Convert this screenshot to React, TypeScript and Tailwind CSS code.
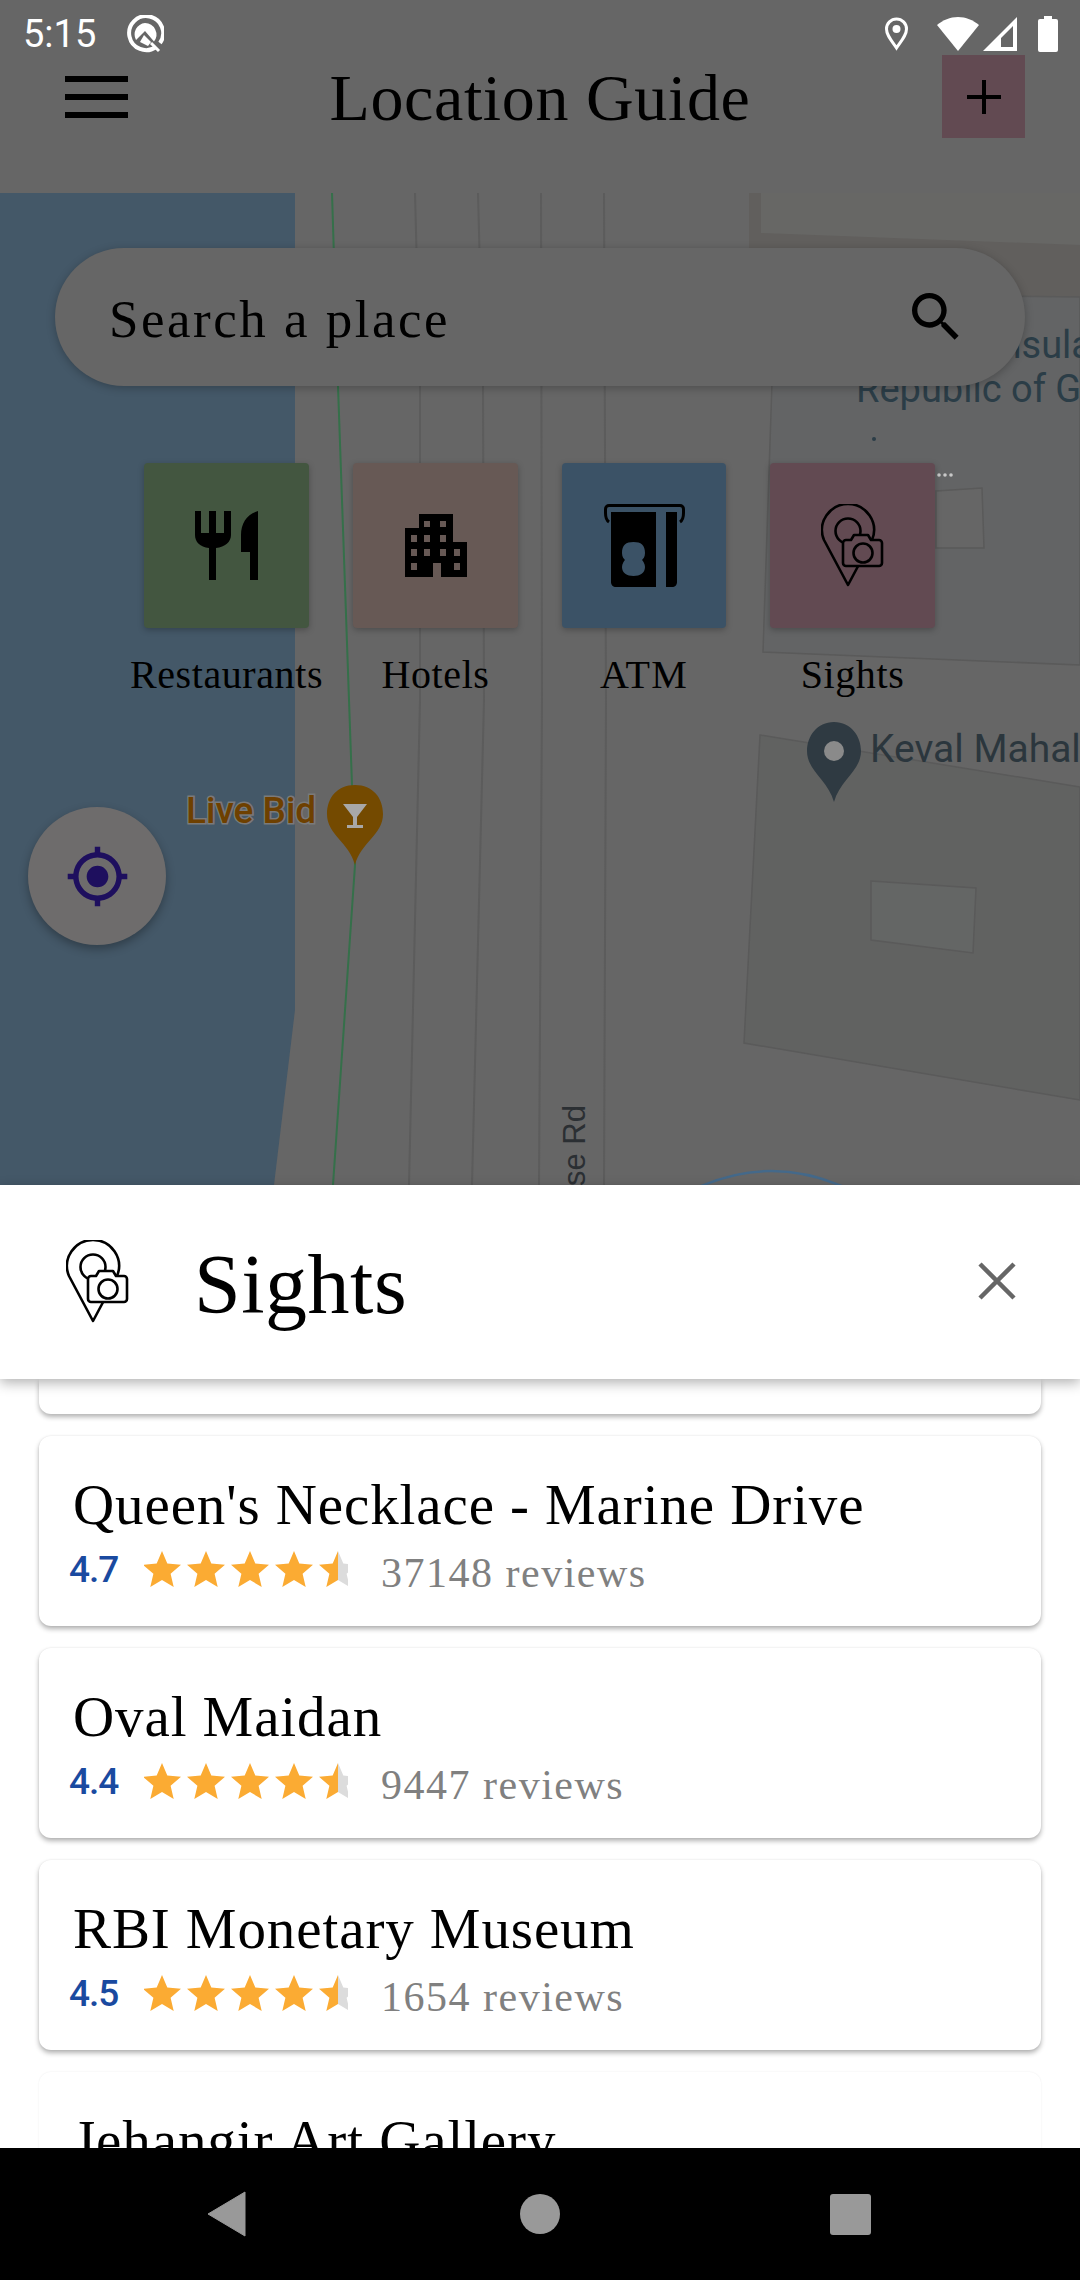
// App.tsx - Location Guide, "Sights" sheet open over the dimmed map
const slab = "font-['Liberation_Serif',serif]";

const places = [
  { name: "Queen's Necklace - Marine Drive", rating: "4.7", reviews: "37148 reviews" },
  { name: "Oval Maidan", rating: "4.4", reviews: "9447 reviews" },
  { name: "RBI Monetary Museum", rating: "4.5", reviews: "1654 reviews" },
];

const STAR = "M18 0l5.3 12.6L37 13.8 26.6 22.8 29.7 36 18 29 6.300 36 9.400 22.800 -1 13.800 12.700 12.600z";

function SightsIcon({ bg, className }: { bg: string; className: string }) {
  return (
    <svg viewBox="0 0 64 84" className={className} fill="none" stroke="#000" strokeWidth="2.6">
      <path d="M27 81 3 36A26 26 0 1 1 51 36Z" strokeLinejoin="round" />
      <circle cx="27" cy="27" r="12.500" />
      <path
        d="M25 36h5l3-5h14l3 5h8a3 3 0 0 1 3 3v20a3 3 0 0 1-3 3H25a3 3 0 0 1-3-3V39a3 3 0 0 1 3-3z"
        fill={bg}
        strokeLinejoin="round"
      />
      <circle cx="42" cy="49" r="9.500" fill={bg} />
    </svg>
  );
}

function Stars({ id }: { id: string }) {
  return (
    <svg viewBox="0 0 204 36" className="w-[204px] h-[36px] shrink-0">
      {[0, 44, 88, 132].map((x) => (
        <path key={x} d={STAR} transform={`translate(${x} 0)`} fill="#fbab33" />
      ))}
      <clipPath id={`${id}-l`}><rect x="175" y="0" width="19" height="36" /></clipPath>
      <clipPath id={`${id}-r`}><rect x="194" y="0" width="10" height="36" /></clipPath>
      <g clipPath={`url(#${id}-l)`}>
        <path d={STAR} transform="translate(176 0)" fill="#fbab33" />
      </g>
      <g clipPath={`url(#${id}-r)`}>
        <path d={STAR} transform="translate(176 0)" fill="#dcdcdc" />
      </g>
    </svg>
  );
}

function PlaceCard({ name, rating, reviews }: { name: string; rating: string; reviews: string }) {
  return (
    <div className="h-[190px] shrink-0 rounded-[12px] bg-white shadow-[0_3px_5px_rgba(0,0,0,0.3),0_0_2px_rgba(0,0,0,0.08)] pl-[34px] pt-[37px]">
      <div className={`${slab} text-[57px] leading-[64px] text-black tracking-[0.9px] whitespace-nowrap`}>{name}</div>
      <div className="flex items-center mt-[10px] -ml-[4px] h-[44px]">
        <div className="w-[312px] flex items-center gap-[26px] shrink-0">
          <span className="font-['Roboto',sans-serif] font-medium text-[37px] leading-none text-[#1a4aa0] tracking-[-1px]">{rating}</span>
          <Stars id={`star-${rating}`} />
        </div>
        <span className={`${slab} mt-[8px] text-[42px] leading-none text-[#808080] tracking-[1.5px]`}>{reviews}</span>
      </div>
    </div>
  );
}

function MapLayer() {
  return (
    <svg viewBox="0 193 1080 992" className="absolute inset-0 w-full h-full" fill="none">
      <path d="M749 193H1080V298H749Z" fill="#615f5d" />
      <path d="M761 193H1080V245L761 233Z" fill="#676765" />
      <path d="M775 293 1080 297V665L763 652Z" fill="#636465" stroke="#5a5a5a" strokeWidth="1.500" />
      <path d="M936 491 982 488 984 548H936Z" fill="#666" stroke="#5a5a5a" strokeWidth="1.500" />
      <path d="M760 735 1080 787V1100L744 1043Z" fill="#616261" stroke="#5a5a5a" strokeWidth="1.500" />
      <path d="M871 881 976 888 973 953 871 940Z" fill="#646665" stroke="#5a5a5a" strokeWidth="1.500" />
      <path d="M0 193H295V1010L274 1185H0Z" fill="#445868" />
      <g stroke="#5c5c5c" strokeWidth="2">
        <path d="M415 193 420 386 420 700 409 1185" />
        <path d="M478 193 483 386 484 700 472 1185" />
        <path d="M541 193 542 700 539 1185" />
        <path d="M604 193 606 700 604 1185" />
      </g>
      <path d="M332 193 338 386 349 700 352 785 355 865 333 1185" stroke="#35704a" strokeWidth="2" />
      <path d="M699 1187Q771 1155 844 1187" stroke="#44698a" strokeWidth="2.500" />

      <text x="1092" y="358" textAnchor="end" fill="#2b3d47" fontFamily="Roboto, sans-serif" fontSize="38">Peninsula</text>
      <text x="856" y="402" fill="#2b3d47" fontFamily="Roboto, sans-serif" fontSize="38">Republic of Gujarat</text>
      <circle cx="874" cy="439" r="2" fill="#2b3d47" />
      <g fill="#c8c8c8">
        <circle cx="939" cy="475" r="1.800" />
        <circle cx="945" cy="475" r="1.800" />
        <circle cx="951" cy="475" r="1.800" />
      </g>

      <path d="M355 785c-18 0-28 13-28 29 0 21 22 28 28 51 6-23 28-30 28-51 0-16-10-29-28-29z" fill="#744a00" />
      <path d="M343 804h24l-10 13v8h6v3h-16v-3h6v-8z" fill="#a8a8a8" />
      <text x="186" y="823" fill="#6e4000" stroke="#7a7a7a" strokeWidth="3" paintOrder="stroke" fontWeight="500" fontFamily="Roboto, sans-serif" fontSize="37">Live Bid</text>

      <path d="M834 722c-17 0-27 14-27 29 0 20 21 29 27 51 6-22 27-31 27-51 0-15-10-29-27-29z" fill="#2f3a42" />
      <circle cx="834" cy="751" r="10" fill="#8a8a8a" />
      <text x="870" y="762" fill="#2b363d" fontFamily="Roboto, sans-serif" fontSize="39">Keval Mahal</text>

      <text transform="translate(585 1224) rotate(-90)" fill="#2b2f33" fontFamily="'Liberation Sans', sans-serif" fontSize="31">Bose Rd</text>
    </svg>
  );
}

export default function App() {
  return (
    <div className="w-[1080px] h-[2280px] flex flex-col overflow-hidden bg-white">
      <header className="relative z-10 h-[193px] shrink-0 bg-[#666666]">
        <div className="h-[55px] flex items-center pl-[23px] pr-[22px] pt-[12px] relative">
          <span className="font-['Roboto',sans-serif] text-[38px] leading-none text-white">5:15</span>
          <svg viewBox="0 0 38 38" className="w-[38px] h-[38px] ml-[30px]" fill="none">
            <path d="M30 32A17 17 0 1 1 34 28" stroke="#fff" strokeWidth="4" />
            <path d="M19 8a11.500 11.500 0 0 1 9 18.500L19 16l-9 9A11.500 11.500 0 0 1 19 8z" fill="#fff" />
            <path d="M18 20l7 7-3 4-8-4z" fill="#fff" />
            <path d="M25 28l8 8" stroke="#fff" strokeWidth="3" />
          </svg>
          <div className="ml-auto flex items-center">
            <svg viewBox="0 0 25 34" className="w-[25px] h-[34px]" fill="none">
              <path d="M12.500 31C7 23 2.500 18 2.500 12a10 10 0 0 1 20 0c0 6-4.500 11-10 19z" stroke="#fff" strokeWidth="3" />
              <circle cx="12.500" cy="12" r="4" fill="#fff" />
            </svg>
            <svg viewBox="0 0 42 34" className="w-[42px] h-[34px] ml-[28px]">
              <path d="M21 34 0 8C6 3 13 0 21 0s15 3 21 8z" fill="#fff" />
            </svg>
            <svg viewBox="0 0 34 34" className="w-[34px] h-[34px] ml-[4px]">
              <path fillRule="evenodd" d="M0 34 34 0V34ZM18 30H30V9L18 21Z" fill="#fff" />
            </svg>
            <svg viewBox="0 0 20 36" className="w-[20px] h-[36px] ml-[21px]">
              <path d="M6 0h8v3h4a2 2 0 0 1 2 2v29a2 2 0 0 1-2 2H2a2 2 0 0 1-2-2V5a2 2 0 0 1 2-2h4z" fill="#fff" />
            </svg>
          </div>
        </div>
        <div className="relative h-[83px] flex items-center justify-between pl-[65px] pr-[55px]">
          <div className="flex flex-col gap-[12px]">
            <div className="w-[63px] h-[6px] bg-black" />
            <div className="w-[63px] h-[6px] bg-black" />
            <div className="w-[63px] h-[6px] bg-black" />
          </div>
          <h1 className={`${slab} absolute left-0 right-0 text-center text-[66px] leading-[83px] text-black font-normal pointer-events-none tracking-[0.6px] pt-[1px]`}>
            Location Guide
          </h1>
          <button className="w-[83px] h-[83px] bg-[#624a52] flex items-center justify-center">
            <svg viewBox="0 0 34 34" className="w-[34px] h-[34px]">
              <path d="M15 0h4v15h15v4H19v15h-4V19H0v-4h15z" fill="#000" />
            </svg>
          </button>
        </div>
      </header>

      <section className="relative h-[992px] shrink-0 bg-[#666666] overflow-hidden">
        <MapLayer />
        <div className="absolute inset-0 flex flex-col">
          <div className="mx-[55px] mt-[55px] h-[138px] rounded-full bg-[#666666] shadow-[0_2px_8px_rgba(0,0,0,0.25)] flex items-center justify-between pl-[54px] pr-[65px]">
            <span className={`${slab} pt-[4px] text-[53px] leading-none text-black tracking-[2.5px]`}>Search a place</span>
            <svg viewBox="3 3 18 18" className="w-[48px] h-[48px]">
              <path d="M15.500 14h-.79l-.28-.27A6.471 6.471 0 0 0 16 9.500 6.500 6.500 0 1 0 9.500 16c1.610 0 3.090-.59 4.230-1.570l.27.28v.79l5 4.990L20.490 19l-4.990-5zm-6 0C7.010 14 5 11.990 5 9.500S7.010 5 9.500 5 14 7.010 14 9.500 11.990 14 9.500 14z" fill="#000" />
            </svg>
          </div>

          <div className="flex ml-[144px] mt-[77px] gap-[44px] h-[165px]">
            <div className="relative w-[165px] h-[165px] rounded-[4px] bg-[#435640] shadow-[0_2px_6px_rgba(0,0,0,0.25)] flex items-center justify-center">
              <svg viewBox="0 0 63 69" className="w-[63px] h-[69px]">
                <path d="M0 0h6v22h8V0h7v22h8V0h7v24c0 7-6 12-15 13v32h-7V37C5 36 0 31 0 24z" fill="#000" />
                <path d="M63 0v69h-8V41h-9V24C46 12 52 3 63 0z" fill="#000" />
              </svg>
              <span className={`${slab} absolute top-[192px] left-1/2 -translate-x-1/2 whitespace-nowrap text-[40px] leading-none text-black tracking-[0.6px]`}>Restaurants</span>
            </div>
            <div className="relative w-[165px] h-[165px] rounded-[4px] bg-[#675955] shadow-[0_2px_6px_rgba(0,0,0,0.25)] flex items-center justify-center">
              <svg viewBox="0 0 62 63" className="w-[62px] h-[63px]">
                <path d="M14 0h34v28h14v35H36V49h-8v14H0V14h14z" fill="#000" />
                <path d="M19 7h6v6h-6zM35 7h6v6h-6zM6 21h6v7H6zM19 21h6v7h-6zM35 21h6v7h-6zM6 35h6v7H6zM19 35h6v7h-6zM35 35h6v7h-6zM49 35h6v7h-6zM6 49h6v7H6zM49 49h6v7h-6z" fill="#675955" />
              </svg>
              <span className={`${slab} absolute top-[192px] left-1/2 -translate-x-1/2 whitespace-nowrap text-[40px] leading-none text-black tracking-[0.6px]`}>Hotels</span>
            </div>
            <div className="relative w-[164px] h-[165px] rounded-[4px] bg-[#3b5266] shadow-[0_2px_6px_rgba(0,0,0,0.25)] flex items-center justify-center">
              <svg viewBox="0 0 81 83" className="w-[81px] h-[83px]" fill="none">
                <path d="M5 18C2 16 1.500 13 1.500 9V5C1.500 3 3 1.500 5 1.500H76C78 1.500 79.500 3 79.500 5V9C79.500 13 79 16 76 18" stroke="#000" strokeWidth="3" />
                <path d="M7 8H52V83H12C9 83 7 81 7 78Z" fill="#000" />
                <path d="M62 8H73V78C73 81 71 83 68 83H62Z" fill="#000" />
                <path d="M18 49C18 41 22 38 29.500 38S41 41 41 49C41 53 39 55 38 56C39 57 41 60 41 63C41 69 36 72 29.500 72S18 69 18 63C18 60 20 57 21 56C20 55 18 53 18 49Z" fill="#3b5266" />
              </svg>
              <span className={`${slab} absolute top-[192px] left-1/2 -translate-x-1/2 whitespace-nowrap text-[40px] leading-none text-black tracking-[1.2px]`}>ATM</span>
            </div>
            <div className="relative w-[165px] h-[165px] rounded-[4px] bg-[#624a52] shadow-[0_2px_6px_rgba(0,0,0,0.25)] flex items-center justify-center">
              <SightsIcon bg="#624a52" className="w-[64px] h-[84px]" />
              <span className={`${slab} absolute top-[192px] left-1/2 -translate-x-1/2 whitespace-nowrap text-[40px] leading-none text-black tracking-[0.6px]`}>Sights</span>
            </div>
          </div>

          <button className="ml-[28px] mt-[179px] w-[138px] h-[138px] rounded-full bg-[#6e6c6c] shadow-[0_4px_10px_rgba(0,0,0,0.3)] flex items-center justify-center">
            <svg viewBox="0 0 24 24" className="w-[65px] h-[65px]">
              <path d="M12 8c-2.210 0-4 1.790-4 4s1.790 4 4 4 4-1.790 4-4-1.790-4-4-4zm8.940 3c-.46-4.170-3.770-7.480-7.940-7.940V1h-2v2.060C6.830 3.520 3.520 6.830 3.060 11H1v2h2.060c.46 4.170 3.770 7.480 7.940 7.940V23h2v-2.060c4.170-.46 7.480-3.770 7.940-7.940H23v-2h-2.060zM12 19c-3.870 0-7-3.130-7-7s3.130-7 7-7 7 3.130 7 7-3.130 7-7 7z" fill="#1e0f5e" />
            </svg>
          </button>
        </div>
      </section>

      <div className="relative z-10 h-[194px] shrink-0 bg-white shadow-[0_4px_12px_rgba(0,0,0,0.3)] flex items-center pl-[66px] pr-[64px]">
        <SightsIcon bg="#ffffff" className="w-[64px] h-[84px]" />
        <span className={`${slab} ml-[64px] pt-[5px] text-[84px] leading-none text-black tracking-[0.5px]`}>Sights</span>
        <svg viewBox="0 0 38 38" className="w-[38px] h-[38px] ml-auto -mt-[2px]">
          <path d="M2 2 36 36M36 2 2 36" stroke="#666" strokeWidth="4.500" />
        </svg>
      </div>

      <main className="h-[769px] shrink-0 overflow-hidden bg-white flex flex-col gap-[22px] px-[39px]">
        <div className="h-[35px] shrink-0 rounded-b-[12px] bg-white shadow-[0_3px_5px_rgba(0,0,0,0.3)]" />
        {places.map((p) => (
          <PlaceCard key={p.name} {...p} />
        ))}
        <div className="h-[190px] shrink-0 rounded-[12px] bg-white shadow-[0_0_2px_rgba(0,0,0,0.08)] pl-[34px] pt-[37px]">
          <div className={`${slab} text-[57px] leading-[64px] text-black tracking-[0.9px]`}>Jehangir Art Gallery</div>
        </div>
      </main>

      <nav className="h-[132px] shrink-0 bg-black flex items-center pl-[207px] relative z-10">
        <svg viewBox="0 0 39 46" className="w-[39px] h-[46px]">
          <path d="M38 1 1 23 38 45z" fill="#999" stroke="#999" strokeLinejoin="round" />
        </svg>
        <div className="w-[40px] h-[40px] rounded-full bg-[#999] ml-[274px]" />
        <div className="w-[41px] h-[41px] rounded-[3px] bg-[#999] ml-[270px]" />
      </nav>
    </div>
  );
}
